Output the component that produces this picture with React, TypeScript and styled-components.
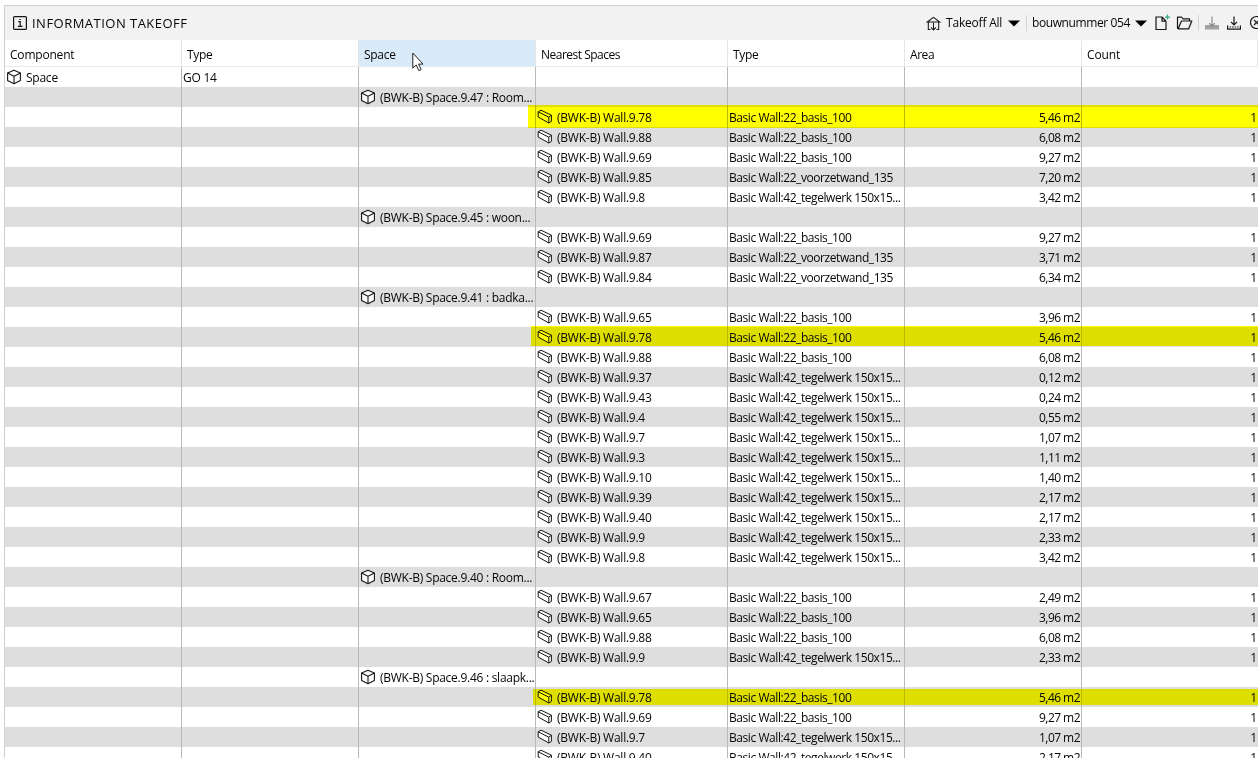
import React from 'react';
import styled, { createGlobalStyle } from 'styled-components';

const GlobalStyle = createGlobalStyle`
  body { margin: 0; background: #fff; overflow: hidden; }
  * { box-sizing: border-box; }
`;

const Window = styled.div`
  width: 1258px;
  height: 758px;
  padding: 5px 0 0 4px;
  overflow: hidden;
  background: #fff;
  font: 12px/20px 'Open Sans', 'Noto Sans', sans-serif;
  color: #060606;
`;

const Panel = styled.div`
  height: 753px;
  overflow: hidden;
  border-top: 1px solid #cfcfcf;
  border-left: 1px solid #cfcfcf;
`;

const Toolbar = styled.header`
  display: flex;
  align-items: center;
  height: 34px;
  padding-left: 8px;
  background: #f2f2f2;
`;

const Title = styled.h1`
  flex: 1;
  margin: 0;
  padding-left: 5px;
  font-size: 13px;
  font-weight: 400;
  letter-spacing: 0.48px;
`;

const Tools = styled.div`
  display: flex;
  flex: none;
  align-items: center;
  width: 332px;
  height: 34px;
`;

const Label = styled.span<{ $width: number; $spacing?: number }>`
  flex: none;
  width: ${(p) => p.$width}px;
  white-space: nowrap;
  letter-spacing: ${(p) => p.$spacing ?? 0}px;
`;

const Separator = styled.i<{ $gap: number }>`
  flex: none;
  width: 1px;
  height: 16px;
  margin-right: ${(p) => p.$gap}px;
  background: #d4d4d4;
`;

const Icon = styled.svg<{ $gap?: number }>`
  flex: none;
  display: block;
  margin-right: ${(p) => p.$gap ?? 0}px;
  fill: none;
  stroke: #161616;
  overflow: visible;
`;

const columns = '177px 177px 177px 192px 177px 177px 176px';

const HeaderRow = styled.div`
  display: grid;
  grid-template-columns: ${columns};
  height: 27px;
  border-bottom: 1px solid #e6ebee;
`;

const HeaderCell = styled.div<{ $hovered?: boolean; $spacing: number }>`
  position: relative;
  padding: 5px 0 0 5px;
  border-right: 1px solid #e2e6e8;
  letter-spacing: ${(p) => p.$spacing}px;
  background: ${(p) => (p.$hovered ? '#d9ebf9' : '#fff')};
`;

const Pointer = styled.svg`
  position: absolute;
  z-index: 2;
  left: 53px;
  top: 12px;
`;

const Row = styled.div<{ $shaded: boolean }>`
  position: relative;
  display: grid;
  grid-template-columns: ${columns};
  height: 20px;
  background: ${(p) => (p.$shaded ? '#dedede' : '#fff')};
`;

const Cell = styled.div<{ $align?: 'right'; $spacing?: number }>`
  display: flex;
  align-items: center;
  justify-content: ${(p) => (p.$align ? 'flex-end' : 'flex-start')};
  height: 20px;
  padding: 1px 1px 0;
  line-height: 19px;
  white-space: nowrap;
  border-right: 1px solid #b9b9b9;
  letter-spacing: ${(p) => p.$spacing ?? -0.24}px;

  &:last-child { border-right: 0; }
  svg { margin-bottom: 1px; }
`;

const Marker = styled.div<{ $left: number; $top: number; $height: number }>`
  position: absolute;
  z-index: 1;
  left: ${(p) => p.$left}px;
  right: 0;
  top: ${(p) => p.$top}px;
  height: ${(p) => p.$height}px;
  background: #ff0;
  mix-blend-mode: multiply;
`;

const Cube = () => (
  <Icon width="16" height="16" viewBox="0 0 16 16" $gap={4} strokeWidth="1.1" strokeLinejoin="round">
    <path d="M8 1.3 14.4 4v7.5L8 14.7 1.6 11.5V4Z" fill="#fff" />
    <path d="M1.6 4 8 7.2 14.4 4 M8 7.2v7.5" />
  </Icon>
);

const Beam = () => (
  <Icon width="16" height="16" viewBox="0 0 16 16" $gap={4} strokeWidth="1" strokeLinejoin="round">
    <path d="M1.2 2.8 4 1.2 14.4 6.2v6.2L11.8 14 1.2 8Z" fill="#fff" />
    <path d="M1.2 2.8 11.8 8.2V14 M11.8 8.2l2.6-2" />
  </Icon>
);

const Caret = ({ gap }: { gap: number }) => (
  <Icon width="12" height="7" viewBox="0 0 12 7" $gap={gap}>
    <path d="M0 .5h12L6 6.5Z" fill="#000" stroke="none" />
  </Icon>
);

type Marking = { left: number; top: number; height: number };
type Line = { space?: string; wall?: string; type?: string; area?: string; mark?: Marking };

const basis = 'Basic Wall:22_basis_100';
const front = 'Basic Wall:22_voorzetwand_135';
const tiles = 'Basic Wall:42_tegelwerk 150x15...';

const space = (name: string): Line => ({ space: `(BWK-B) Space.${name}...` });
const wall = (id: string, type: string, area: string, mark?: Marking): Line => ({
  wall: `(BWK-B) Wall.${id}`,
  type,
  area: `${area} m2`,
  mark,
});

const lines: Line[] = [
  space('9.47 : Room'),
  wall('9.78', basis, '5,46', { left: 523, top: -2, height: 23 }),
  wall('9.88', basis, '6,08'),
  wall('9.69', basis, '9,27'),
  wall('9.85', front, '7,20'),
  wall('9.8', tiles, '3,42'),
  space('9.45 : woon'),
  wall('9.69', basis, '9,27'),
  wall('9.87', front, '3,71'),
  wall('9.84', front, '6,34'),
  space('9.41 : badka'),
  wall('9.65', basis, '3,96'),
  wall('9.78', basis, '5,46', { left: 526, top: -1, height: 20 }),
  wall('9.88', basis, '6,08'),
  wall('9.37', tiles, '0,12'),
  wall('9.43', tiles, '0,24'),
  wall('9.4', tiles, '0,55'),
  wall('9.7', tiles, '1,07'),
  wall('9.3', tiles, '1,11'),
  wall('9.10', tiles, '1,40'),
  wall('9.39', tiles, '2,17'),
  wall('9.40', tiles, '2,17'),
  wall('9.9', tiles, '2,33'),
  wall('9.8', tiles, '3,42'),
  space('9.40 : Room'),
  wall('9.67', basis, '2,49'),
  wall('9.65', basis, '3,96'),
  wall('9.88', basis, '6,08'),
  wall('9.9', tiles, '2,33'),
  space('9.46 : slaapk'),
  wall('9.78', basis, '5,46', { left: 528, top: 2, height: 16 }),
  wall('9.69', basis, '9,27'),
  wall('9.7', tiles, '1,07'),
  wall('9.40', tiles, '2,17'),
];

const headers = [
  { name: 'Component', spacing: -0.2 },
  { name: 'Type', spacing: -0.35 },
  { name: 'Space', spacing: -0.3 },
  { name: 'Nearest Spaces', spacing: -0.5 },
  { name: 'Type', spacing: -0.35 },
  { name: 'Area', spacing: -0.45 },
  { name: 'Count', spacing: -0.1 },
];

export default function App() {
  return (
    <Window>
      <GlobalStyle />
      <Panel>
        <Toolbar>
          <Icon width="14" height="14" viewBox="0 0 14 14" strokeWidth="1.2">
            <rect x=".6" y=".6" width="12.8" height="12.8" rx="1" />
            <path d="M5.2 5.7h2v4.5M4.8 10.4h4.7M6.3 3.5h1.4" />
          </Icon>
          <Title>INFORMATION TAKEOFF</Title>
          <Tools>
            <Icon width="15" height="15" viewBox="0 0 15 15" $gap={5} strokeWidth="1.05">
              <path d="M1.3 6 7.5 1.3 13.7 6ZM2.3 6v7.5H4.6M10.4 13.5h2.3V6M7.5 6.8v7M5 11.4l2.5 2.5 2.5-2.5" />
            </Icon>
            <Label $width={62} $spacing={-0.2}>Takeoff All</Label>
            <Caret gap={6} />
            <Separator $gap={5} />
            <Label $width={103} $spacing={-0.4}>bouwnummer 054</Label>
            <Caret gap={8} />
            <Icon width="15" height="16" viewBox="0 0 15 16" $gap={7} strokeWidth="1.2">
              <path d="M7 2H1v12.5h10V6.2M7 2v4.2h4M7 2l4 4.2" />
              <path d="M12.5 -.4v5M10 2.1h5" stroke="#35a979" />
            </Icon>
            <Icon width="16" height="14" viewBox="0 0 16 14" $gap={5} strokeWidth="1.2" strokeLinejoin="round">
              <path d="M1.2 12.8H11.7L14.8 5H4.5L1.2 12.8ZM1.2 12.8 .5 12V1.2h4l1.6 1.6h6.4V5" />
            </Icon>
            <Separator $gap={6} />
            <Icon width="14" height="14" viewBox="0 0 14 14" $gap={8} strokeWidth="1.1">
              <path d="M0 9h14v4.5H0Z" fill="#a2a2a2" stroke="none" />
              <path d="M7 .5v9.3M4.2 7.2 7 9.9l2.8-2.7" stroke="#858585" />
            </Icon>
            <Icon width="14" height="14" viewBox="0 0 14 14" $gap={9} strokeWidth="1.2">
              <path d="M.6 9.5v3.7h12.8V9.5M7 .5v8.3M4 5.8l3 3 3-3" />
              <path d="M2.6 11h9" strokeDasharray="1.5 1" />
            </Icon>
            <Icon width="13" height="14" viewBox="0 0 13 14" strokeWidth="1.2">
              <circle cx="6.5" cy="6.5" r="6" />
              <path d="m4 4 5 5M9 4 4 9" />
            </Icon>
          </Tools>
        </Toolbar>

        <HeaderRow>
          {headers.map(({ name, spacing }, i) => (
            <HeaderCell key={i} $hovered={i === 2} $spacing={spacing}>
              {name}
              {i === 2 && (
                <Pointer width="13" height="20" viewBox="0 0 13 20">
                  <path d="M.8 1v15.2l3.4-3.2 2.7 5.7 2.3-1.1-2.6-5.5H11Z" fill="#fff" stroke="#222" />
                </Pointer>
              )}
            </HeaderCell>
          ))}
        </HeaderRow>

        <Row $shaded={false}>
          <Cell><Cube />Space</Cell>
          <Cell>GO 14</Cell>
          <Cell /><Cell /><Cell /><Cell /><Cell />
        </Row>
        {lines.map((line, i) => (
          <Row key={i} $shaded={i % 2 === 0}>
            {line.mark && <Marker $left={line.mark.left} $top={line.mark.top} $height={line.mark.height} />}
            <Cell />
            <Cell />
            <Cell $spacing={-0.27}>{line.space && <><Cube />{line.space}</>}</Cell>
            <Cell>{line.wall && <><Beam />{line.wall}</>}</Cell>
            <Cell $spacing={-0.43}>{line.type}</Cell>
            <Cell $align="right" $spacing={-0.55}>{line.area}</Cell>
            <Cell $align="right" $spacing={0}>{line.wall && '1'}</Cell>
          </Row>
        ))}
      </Panel>
    </Window>
  );
}
